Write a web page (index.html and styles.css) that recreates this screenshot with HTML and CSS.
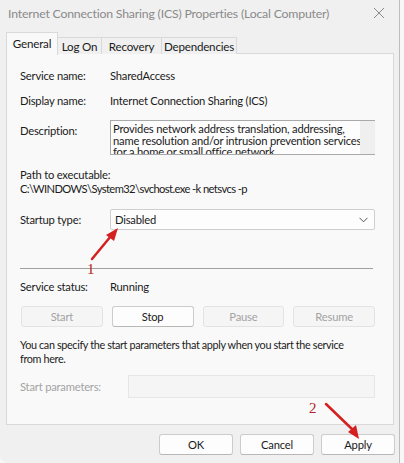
FILE: index.html
```html
<html>

<head>
    <link rel="stylesheet" href="styles.css">
</head>

<body>
    <div class="window">
        <div class="titlebar">
            <span>Internet Connection Sharing (ICS) Properties (Local Computer)</span>
            <svg class="close" width="12" height="12" viewBox="0 0 12 12">
                <path d="M1 1 L11 11 M11 1 L1 11" stroke="#8a8a8a" stroke-width="1" fill="none" />
            </svg>
        </div>

        <div class="tabs">
            <div class="tab active t_general">General</div>
            <div class="tab t_logon">Log On</div>
            <div class="tab t_recovery">Recovery</div>
            <div class="tab t_dep">Dependencies</div>
        </div>

        <div class="panel">
            <div class="row first">
                <div class="label">Service name:</div>
                <div>SharedAccess</div>
            </div>
            <div class="row gap11">
                <div class="label">Display name:</div>
                <div>Internet Connection Sharing (ICS)</div>
            </div>
            <div class="row desc_row">
                <div class="label desc_label">Description:</div>
                <div class="desc_box">
                    <div class="desc_text">Provides network address translation, addressing,<br>name resolution and/or intrusion prevention services<br>for a home or small office network.</div>
                    <div class="scroll"></div>
                </div>
            </div>
            <div class="line path_label">Path to executable:</div>
            <div class="line path">C:\WINDOWS\System32\svchost.exe -k netsvcs -p</div>
            <div class="row startup_row">
                <div class="label">Startup type:</div>
                <div class="select">
                    <span>Disabled</span>
                    <svg width="9" height="6" viewBox="0 0 9 6">
                        <path d="M0.5 0.8 L4.5 4.8 L8.5 0.8" stroke="#555" stroke-width="1" fill="none" />
                    </svg>
                </div>
            </div>
            <div class="separator"></div>
            <div class="row status_row">
                <div class="label">Service status:</div>
                <div>Running</div>
            </div>
            <div class="service_buttons">
                <div class="btn disabled">Start</div>
                <div class="btn">Stop</div>
                <div class="btn disabled">Pause</div>
                <div class="btn disabled">Resume</div>
            </div>
            <div class="hint">You can specify the start parameters that apply when you start the service<br>from here.</div>
            <div class="params_row">
                <div class="params_label">Start parameters:</div>
                <div class="params_box"></div>
            </div>
        </div>

        <div class="footer">
            <div class="btn wide">OK</div>
            <div class="btn wide">Cancel</div>
            <div class="btn wide">Apply</div>
        </div>
    </div>

    <!-- red annotation arrows -->
    <svg class="notes" width="404" height="463" viewBox="0 0 404 463">
        <path d="M92 259 L111 236" stroke="#d42020" stroke-width="2.5" stroke-linecap="round" />
        <path d="M118 228 L106 235 L114 241 Z" fill="#d42020" />
        <text x="87" y="274" class="num">1</text>
        <path d="M326 404 L353 430" stroke="#d42020" stroke-width="2.5" stroke-linecap="round" />
        <path d="M359 439 L348 432 L356 425 Z" fill="#d42020" />
        <text x="309" y="413" class="num">2</text>
    </svg>
</body>

</html>
```

FILE: styles.css
```css
body {
    margin: 0;
    background-color: #f7f7f7;
    font-family: Lato, "Liberation Sans", sans-serif;
    font-size: 11.2px;
    letter-spacing: -0.2px;
    color: #1b1b1b;
}

.window {
    width: 399px;
    height: 463px;
    background-color: #f0f0f0;
    border-right: 1px solid #bdbdbd;
    border-bottom-left-radius: 8px;
}

.titlebar {
    height: 26px;
    padding: 0 14px 0 8px;
    display: flex;
    align-items: center;
    justify-content: space-between;
    color: #8a8a8a;
    font-size: 12.3px;
}

.tabs {
    display: flex;
    align-items: flex-end;
    height: 28px;
    padding-left: 6px;
    margin-bottom: -1px;
    position: relative;
}

.tab {
    height: 16px;
    border: 1px solid #d9d9d9;
    border-bottom: none;
    border-left: none;
    background-color: #f0f0f0;
    display: flex;
    align-items: center;
    justify-content: center;
    font-size: 11.6px;
}

.tab.active {
    height: 20px;
    padding-bottom: 2px;
    border-left: 1px solid #d9d9d9;
    background-color: #f9f9f9;
    margin-bottom: -1px;
}

.t_general {
    width: 50px;
}

.t_logon {
    width: 43px;
}

.t_recovery {
    width: 59px;
}

.t_dep {
    width: 74px;
}

.panel {
    margin: 0 5px 0 6px;
    height: 370px;
    padding: 0 18px 0 13px;
    border: 1px solid #d9d9d9;
    background-color: #f9f9f9;
}

.row {
    display: flex;
    align-items: center;
    line-height: 14px;
}

.label {
    width: 90px;
    flex-shrink: 0;
}

.first {
    padding-top: 15px;
}

.gap11 {
    margin-top: 11px;
}

.desc_row {
    margin-top: 12px;
    align-items: flex-start;
}

.desc_label {
    padding-top: 4px;
}

.desc_box {
    flex: 1;
    height: 33px;
    border: 1px solid #a9a9a9;
    border-right: none;
    background-color: #fdfdfd;
    display: flex;
    overflow: hidden;
}

.desc_text {
    flex: 1;
    padding: 2px 0 0 2px;
    line-height: 11.6px;
    white-space: nowrap;
    overflow: hidden;
}

.scroll {
    width: 15px;
    background-color: #efefef;
}

.line {
    line-height: 14px;
}

.path_label {
    margin-top: 13px;
}

.path {
    letter-spacing: -0.6px;
}

.startup_row {
    margin-top: 13px;
}

.select {
    flex: 1;
    height: 19px;
    border: 1px solid #cfcfcf;
    border-radius: 2px;
    background-color: #fdfdfd;
    display: flex;
    align-items: center;
    justify-content: space-between;
    padding: 0 6px 0 4px;
}

.separator {
    margin-top: 38px;
    height: 1px;
    width: 353px;
    background-color: #a0a0a0;
}

.status_row {
    margin-top: 11px;
}

.service_buttons {
    margin-top: 12px;
    display: grid;
    grid-template-columns: repeat(4, 1fr);
    gap: 9px;
    padding-left: 1px;
}

.btn {
    height: 19px;
    border: 1px solid #cccccc;
    border-bottom-color: #b8b8b8;
    border-radius: 3px;
    background-color: #fdfdfd;
    display: flex;
    align-items: center;
    justify-content: center;
}

.btn.disabled {
    color: #a3a3a3;
    background-color: #f5f5f5;
    border-color: #e3e3e3;
}

.hint {
    margin-top: 11px;
    line-height: 13.5px;
    white-space: nowrap;
    font-size: 10.8px;
    letter-spacing: -0.35px;
}

.params_row {
    margin-top: 10px;
    display: flex;
    align-items: center;
}

.params_label {
    width: 108px;
    color: #a3a3a3;
}

.params_box {
    flex: 1;
    height: 21px;
    border: 1px solid #e6e6e6;
    background-color: #f5f5f5;
}

.footer {
    display: flex;
    justify-content: flex-end;
    gap: 7px;
    padding: 9px 4px 0 0;
}

.btn.wide {
    width: 72px;
    height: 19px;
}

.notes {
    position: absolute;
    left: 0;
    top: 0;
    pointer-events: none;
}

.num {
    fill: #b52222;
    font-family: "Liberation Serif", serif;
    font-size: 15px;
    letter-spacing: 0;
}
```
